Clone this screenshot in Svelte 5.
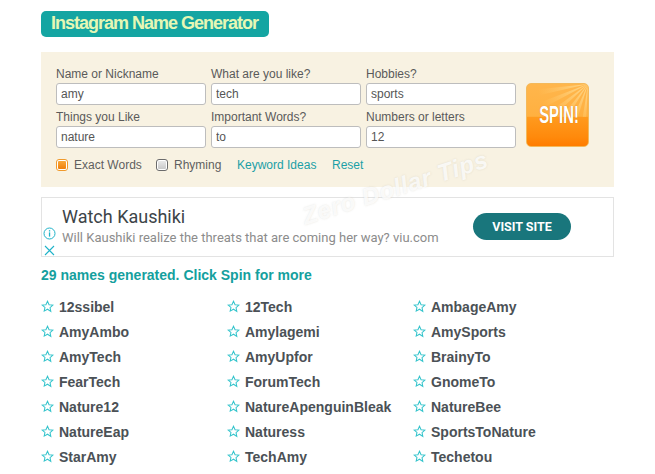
<script>
  const fields = [
    { label: 'Name or Nickname', value: 'amy' },
    { label: 'What are you like?', value: 'tech' },
    { label: 'Hobbies?', value: 'sports' },
    { label: 'Things you Like', value: 'nature' },
    { label: 'Important Words?', value: 'to' },
    { label: 'Numbers or letters', value: '12' }
  ];
  const names = [
    '12ssibel', '12Tech', 'AmbageAmy',
    'AmyAmbo', 'Amylagemi', 'AmySports',
    'AmyTech', 'AmyUpfor', 'BrainyTo',
    'FearTech', 'ForumTech', 'GnomeTo',
    'Nature12', 'NatureApenguinBleak', 'NatureBee',
    'NatureEap', 'Naturess', 'SportsToNature',
    'StarAmy', 'TechAmy', 'Techetou'
  ];
  const wedges = [[6, 13], [21, 28], [36, 43], [51, 58], [66, 73], [81, 87]];
  const pt = (a) => {
    const r = (a * Math.PI) / 180;
    return `${(63 - 90 * Math.cos(r)).toFixed(1)},${(90 * Math.sin(r)).toFixed(1)}`;
  };
  const rays = wedges.map(([a, b]) => `63,0 ${pt(a)} ${pt(b)}`);
</script>

<div class="page">
  <h1 class="title">Instagram Name Generator</h1>

  <section class="panel">
    <div class="top">
      <div class="fields">
        {#each fields as f}
          <label class="field">
            <span class="lbl">{f.label}</span>
            <input type="text" value={f.value} />
          </label>
        {/each}
      </div>
      <button class="spin" type="button">
        <svg class="rays" viewBox="0 0 63 64" aria-hidden="true">
          <defs>
            <radialGradient id="rayfade" gradientUnits="userSpaceOnUse" cx="63" cy="0" r="52">
              <stop offset="0" stop-color="#ffe09a" stop-opacity="0.85" />
              <stop offset="1" stop-color="#ffd27a" stop-opacity="0" />
            </radialGradient>
            <clipPath id="rayclip"><rect width="63" height="34" /></clipPath>
          </defs>
          <g fill="url(#rayfade)" clip-path="url(#rayclip)">
            {#each rays as r}
              <polygon points={r} />
            {/each}
          </g>
        </svg>
        <span class="spintext">SPIN!</span>
      </button>
    </div>
    <div class="opts">
      <span class="chk on"><i></i></span><span class="opt first">Exact Words</span>
      <span class="chk"><i></i></span><span class="opt second">Rhyming</span>
      <a href="#k" class="lnk ideas">Keyword Ideas</a>
      <a href="#r" class="lnk">Reset</a>
    </div>
  </section>

  <section class="ad">
    <div class="adicons">
      <svg width="13" height="13" viewBox="0 0 13 13" aria-hidden="true">
        <circle cx="6.5" cy="6.5" r="5.5" fill="none" stroke="#1fb3c9" stroke-width="1" />
        <rect x="5.9" y="5.4" width="1.3" height="4.2" fill="#1fb3c9" />
        <rect x="5.9" y="3.2" width="1.3" height="1.3" fill="#1fb3c9" />
      </svg>
      <svg width="11" height="11" viewBox="0 0 11 11" aria-hidden="true">
        <path d="M1 1 L10 10 M10 1 L1 10" stroke="#1fb3c9" stroke-width="1.1" fill="none" />
      </svg>
    </div>
    <div class="adtext">
      <div class="adhead">Watch Kaushiki</div>
      <div class="adbody">Will Kaushiki realize the threats that are coming her way? viu.com</div>
    </div>
    <button class="visit" type="button">VISIT SITE</button>
  </section>

  <p class="count">29 names generated. Click Spin for more</p>

  <ul class="names">
    {#each names as n}
      <li>
        <svg class="star" width="13" height="13" viewBox="0 0 24 24" aria-hidden="true">
          <path d="M12 2.2l2.9 6.4 7 .8-5.2 4.7 1.4 6.9L12 17l-6.1 3.5 1.4-6.9L2.100 9.400l7-.8z" fill="none" stroke="#35c4cc" stroke-width="1.9" />
        </svg>
        <span>{n}</span>
      </li>
    {/each}
  </ul>

  <div class="wm">Zero Dollar Tips</div>
</div>

<style>
  :global(body) { margin: 0; background: #fff; }
  .page {
    position: relative;
    width: 655px;
    height: 474px;
    overflow: hidden;
    padding: 11px 41px 0;
    box-sizing: border-box;
    font-family: "Liberation Sans", Arial, sans-serif;
    font-size: 12px;
    color: #555;
  }
  .title {
    margin: 0;
    width: 228px;
    box-sizing: border-box;
    height: 26px;
    line-height: 25px;
    padding: 0 10px;
    border-radius: 5px;
    background: #14a5a2;
    color: #e6f7b4;
    font-size: 18px;
    font-weight: bold;
    letter-spacing: -1px;
    white-space: nowrap;
  }
  .panel {
    margin-top: 15px;
    width: 573px;
    height: 135px;
    box-sizing: border-box;
    background: #f8f2e2;
    padding: 14px 15px 0;
  }
  .top { display: flex; gap: 10px; }
  .fields {
    display: grid;
    grid-template-columns: repeat(3, 150px);
    column-gap: 5px;
    row-gap: 4px;
  }
  .field { display: block; }
  .lbl {
    display: block;
    height: 17px;
    line-height: 16px;
    font-size: 12px;
    color: #5a5a5a;
  }
  input {
    display: block;
    width: 150px;
    height: 22px;
    box-sizing: border-box;
    border: 1px solid #bdbdbd;
    border-radius: 3px;
    padding: 0 4px;
    background: #fff;
    font-family: inherit;
    font-size: 12px;
    color: #555;
    outline: none;
  }
  .spin {
    position: relative;
    width: 63px;
    height: 64px;
    margin-top: 17px;
    padding: 0;
    border: 1px solid #f4b95a;
    border-radius: 5px;
    overflow: hidden;
    background: linear-gradient(#ffb64c 0%, #ffb040 52%, #ff9a1e 54%, #ff8a0c 85%, #ff7c00 100%);
    color: #fff;
  }
  .rays { position: absolute; inset: 0; width: 100%; height: 100%; }
  .spintext {
    position: relative;
    font-family: "Liberation Sans", Arial, sans-serif;
    font-weight: bold;
    font-size: 24px;
    line-height: 24px;
    display: inline-block;
    transform: scaleX(0.62);
    text-shadow: 0 0 1px #c96a00;
  }
  .opts {
    display: flex;
    align-items: center;
    margin-top: 9px;
    height: 16px;
  }
  .chk {
    width: 12px;
    height: 12px;
    box-sizing: border-box;
    border: 1px solid #6b6b6b;
    border-radius: 3px;
    background: #fff;
    padding: 1px;
    display: block;
  }
  .chk i { display: block; width: 100%; height: 100%; border-radius: 1px; background: linear-gradient(#e8e8e8, #c9c9c9); }
  .chk.on { border-color: #f09a2c; }
  .chk.on i { background: linear-gradient(#f9a83a, #f07f0a); }
  .opt { color: #5f5f5f; margin-left: 6px; }
  .first { width: 82px; }
  .second { width: 63px; }
  .lnk { color: #1ba0a6; text-decoration: none; }
  .ideas { width: 95px; }
  .ad {
    position: relative;
    margin-top: 10px;
    width: 573px;
    height: 60px;
    box-sizing: border-box;
    border: 1px solid #e3e3e3;
    display: flex;
    align-items: flex-start;
    font-family: Roboto, sans-serif;
  }
  .adicons {
    width: 14px;
    margin-top: 29px;
    display: flex;
    flex-direction: column;
    align-items: center;
    gap: 5px;
    flex: none;
  }
  .adtext { margin-left: 6px; flex: none; width: 411px; }
  .adhead { font-size: 18px; line-height: 22px; margin-top: 8px; color: #3c4448; font-weight: 400; }
  .adbody { font-size: 13px; line-height: 16px; margin-top: 2px; color: #8c8c8c; white-space: nowrap; }
  .visit {
    width: 98px;
    height: 27px;
    margin-top: 15px;
    padding: 0;
    border: 0;
    border-radius: 14px;
    background: #19767c;
    color: #fff;
    font-family: Roboto, sans-serif;
    font-size: 12.500px;
    font-weight: 700;
  }
  .count {
    margin: 10px 0 0;
    font-size: 14px;
    line-height: 16px;
    font-weight: bold;
    color: #14a09e;
  }
  .names {
    list-style: none;
    margin: 11px 0 0;
    padding: 0;
    display: grid;
    grid-template-columns: repeat(3, 186px);
    grid-auto-rows: 25px;
  }
  .names li {
    display: flex;
    align-items: center;
    gap: 5px;
    height: 25px;
    font-size: 14px;
    font-weight: bold;
    color: #4b5156;
    white-space: nowrap;
  }
  .star { flex: none; }
  .wm {
    position: absolute;
    left: 303px;
    top: 203px;
    font-family: "Liberation Sans", sans-serif;
    font-style: italic;
    font-weight: bold;
    font-size: 24px;
    letter-spacing: 0.7px;
    color: rgba(255, 255, 255, 0.8);
    text-shadow: 0 0 2px rgba(170, 165, 150, 0.3);
    transform: rotate(-17.5deg);
    transform-origin: 0 50%;
    white-space: nowrap;
    pointer-events: none;
  }
</style>
